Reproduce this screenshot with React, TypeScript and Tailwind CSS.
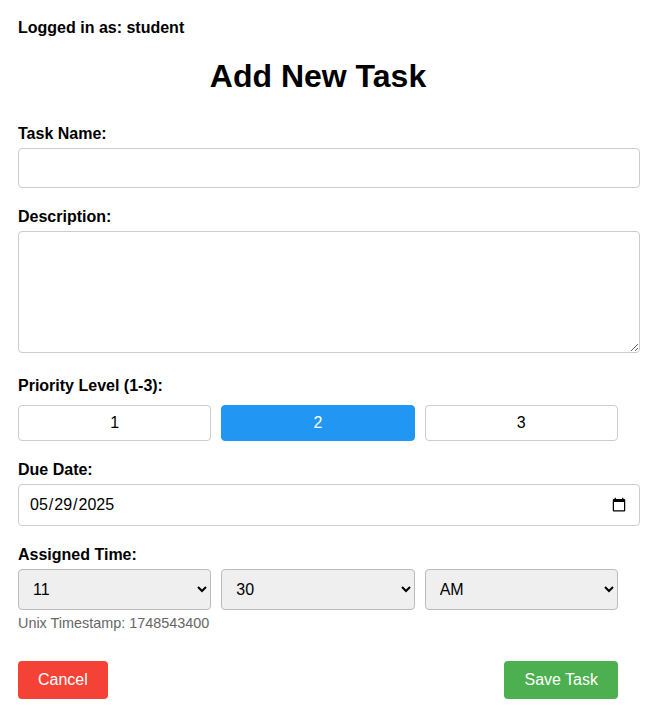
import React, { useState } from "react";

export default function App() {
  const [priority, setPriority] = useState(2);
  const labelCls = "block text-[16px] leading-[18px] font-bold text-black mb-[5px]";
  return (
    <div className="min-h-[714px] bg-white px-[18px] pt-[19px] font-['Liberation_Sans',Arial,sans-serif] text-black">
      <p className="text-[16px] leading-[18px] font-bold">Logged in as: student</p>
      <h2 className="mt-[21px] w-[600px] text-center text-[32px] leading-[37px] font-bold">Add New Task</h2>
      <form className="mt-[30px] w-[600px]" onSubmit={(e) => e.preventDefault()}>
        <div className="mb-[20px]">
          <label className={labelCls}>Task Name:</label>
          <input
            type="text"
            className="block h-[40px] w-[622px] rounded-[4px] border border-[#ccc] bg-white px-[10px] text-[16px] outline-none"
          />
        </div>
        <div className="mb-[24px]">
          <label className={labelCls}>Description:</label>
          <textarea className="block h-[122px] w-[622px] rounded-[4px] border border-[#ccc] bg-white px-[10px] py-[10px] text-[16px] outline-none" />
        </div>
        <div className="mb-[20px]">
          <label className={labelCls}>Priority Level (1-3):</label>
          <div className="mt-[10px] grid grid-cols-3 gap-[10px]">
            {[1, 2, 3].map((n) => (
              <button
                key={n}
                type="button"
                onClick={() => setPriority(n)}
                className={
                  n === priority
                    ? "h-[36px] rounded-[4px] border border-[#2196F3] bg-[#2196F3] text-[16px] text-white"
                    : "h-[36px] rounded-[4px] border border-[#ccc] bg-white text-[16px] text-black"
                }
              >
                {n}
              </button>
            ))}
          </div>
        </div>
        <div className="mb-[20px]">
          <label className={labelCls}>Due Date:</label>
          <input
            type="date"
            defaultValue="2025-05-29"
            className="block h-[42px] w-[622px] rounded-[4px] border border-[#ccc] bg-white px-[10px] text-[16px] outline-none"
          />
        </div>
        <div className="mb-[30px]">
          <label className={labelCls}>Assigned Time:</label>
          <div className="grid grid-cols-3 gap-[10px]">
            <select defaultValue="11" className="h-[41px] rounded-[4px] border border-[#bbb] bg-[#efefef] px-[10px] text-[16px]">
              {Array.from({ length: 12 }, (_, i) => (
                <option key={i} value={String(i + 1)}>{i + 1}</option>
              ))}
            </select>
            <select defaultValue="30" className="h-[41px] rounded-[4px] border border-[#bbb] bg-[#efefef] px-[10px] text-[16px]">
              {["00", "15", "30", "45"].map((m) => (
                <option key={m} value={m}>{m}</option>
              ))}
            </select>
            <select defaultValue="AM" className="h-[41px] rounded-[4px] border border-[#bbb] bg-[#efefef] px-[10px] text-[16px]">
              <option value="AM">AM</option>
              <option value="PM">PM</option>
            </select>
          </div>
          <p className="mt-[5px] text-[14.4px] leading-[16px] text-[#666]">Unix Timestamp: 1748543400</p>
        </div>
        <div className="flex justify-between">
          <button type="button" className="h-[38px] rounded-[4px] bg-[#f44336] px-[20px] text-[16px] text-white">
            Cancel
          </button>
          <button type="submit" className="h-[38px] rounded-[4px] bg-[#4CAF50] px-[20px] text-[16px] text-white">
            Save Task
          </button>
        </div>
      </form>
    </div>
  );
}
